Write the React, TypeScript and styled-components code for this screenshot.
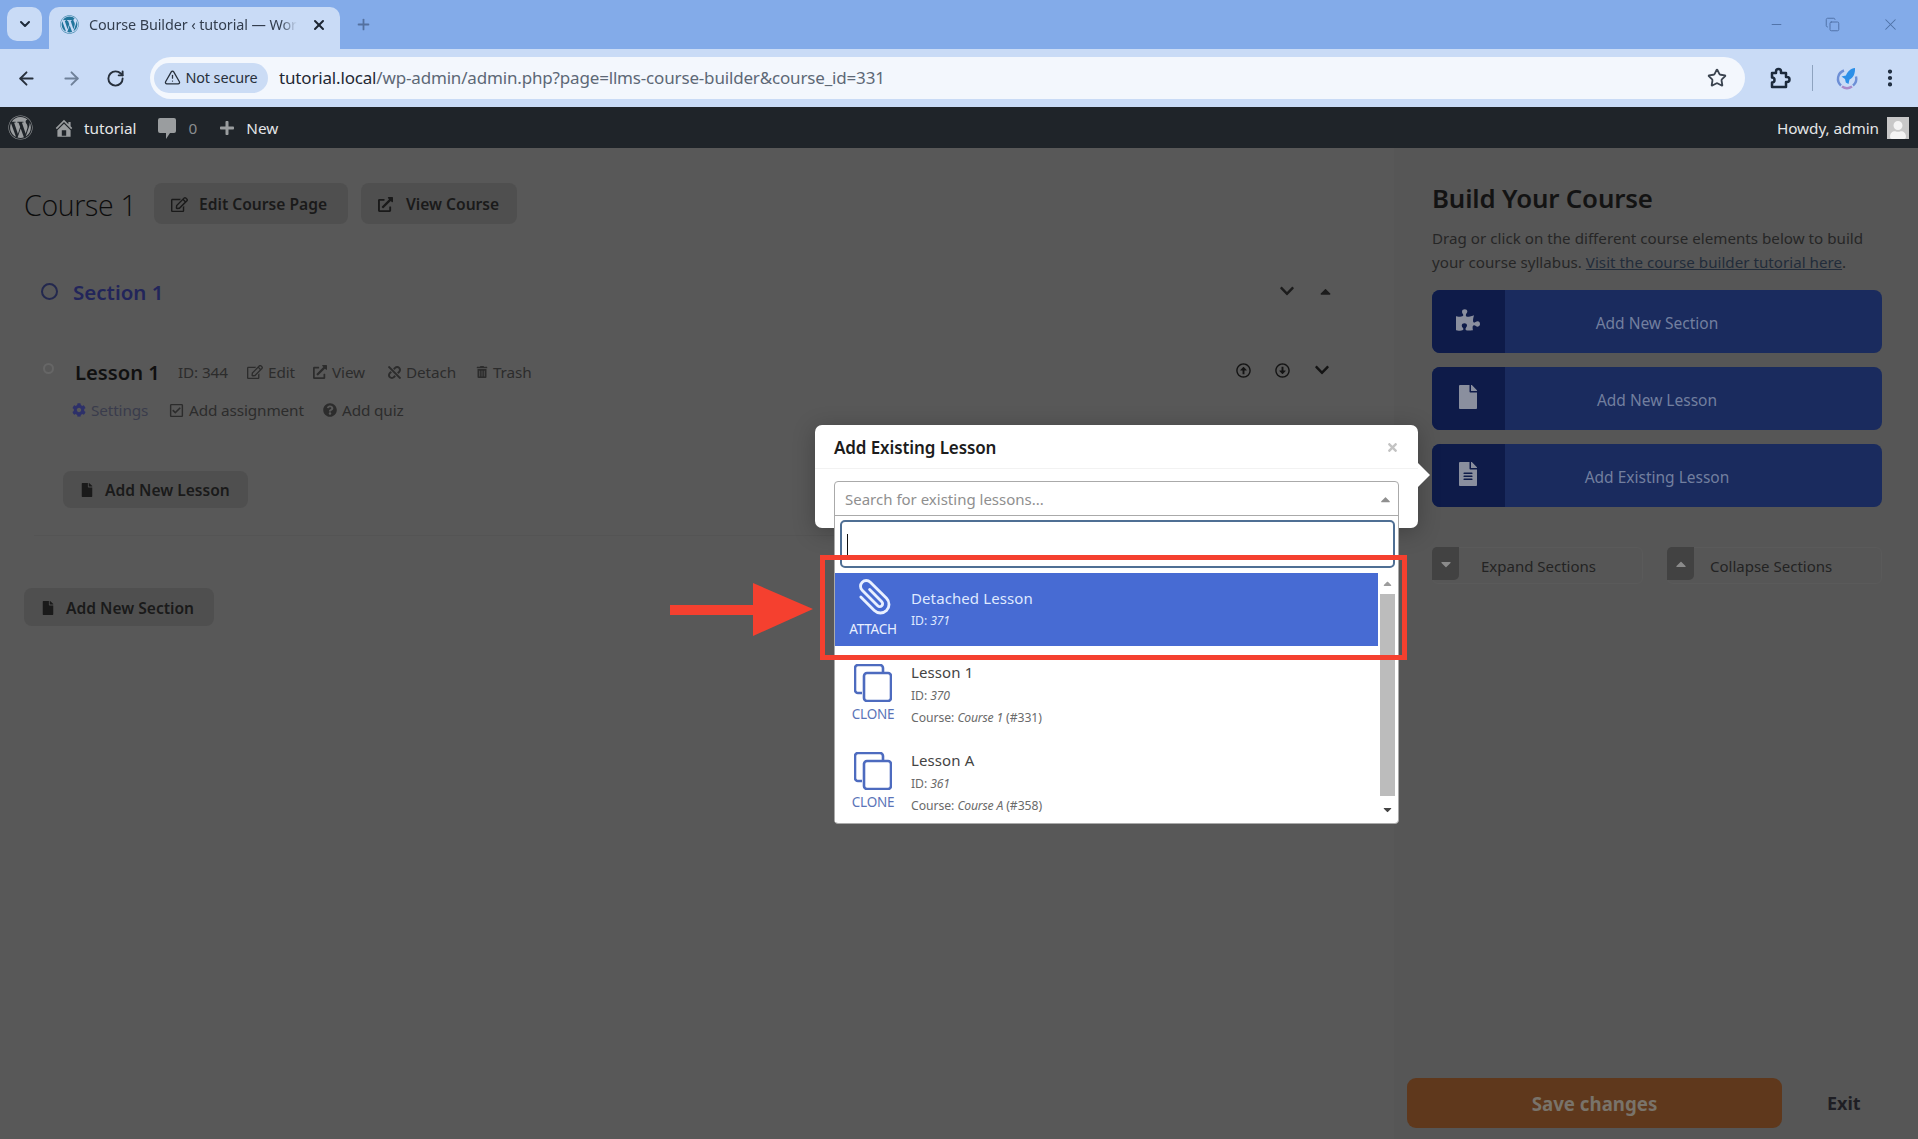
import React from "react";
import styled, { createGlobalStyle } from "styled-components";
import {
  FaCaretDown, FaCaretUp, FaChevronDown, FaCog, FaExternalLinkAlt, FaFile,
  FaFileAlt, FaPlus, FaPuzzlePiece, FaQuestionCircle, FaRegCheckSquare, FaRegEdit,
  FaTimes, FaTrashAlt, FaUnlink, FaUser, FaWordpress, FaRegArrowAltCircleUp, FaRegArrowAltCircleDown,
} from "react-icons/fa";
import { ArrowLeft, ArrowRight, ChevronDown, Copy, Minus, MoreVertical, Plus, RotateCw, Star, TriangleAlert, X } from "lucide-react";

const Global = createGlobalStyle`
  html, body { margin: 0; padding: 0; background: #585858; }
  * { box-sizing: border-box; }
  body { font-family: "Noto Sans", "Open Sans", sans-serif; }
`;

const Page = styled.div`
  width: 1918px; height: 1139px; overflow: hidden; position: relative; display: flex; flex-direction: column;
`;

const TabStrip = styled.div`
  height: 49px; background: #83abe9; display: flex; align-items: flex-start; padding: 7px 0 0 7px; position: relative;
`;
const TabMenu = styled.div`
  width: 35px; height: 34px; border-radius: 10px; background: #c9dbf6; display: flex; align-items: center; justify-content: center; color: #1e2a3a;
`;
const Tab = styled.div`
  width: 291px; height: 42px; margin-left: 7px; background: #c9dbf6; border-radius: 10px 10px 0 0; display: flex; align-items: center;
  padding: 0 12px 7px 11px; font-size: 14.4px; color: #333e4e; letter-spacing: -0.1px;
`;
const TabTitle = styled.span`
  margin-left: 10px; width: 208px; white-space: nowrap; flex: none;
  -webkit-mask-image: linear-gradient(90deg, #000 92%, transparent);
`;
const TabClose = styled.span`
  margin-left: 14px; display: flex; color: #1d2633;
`;
const NewTab = styled.span`
  margin: 9px 0 0 15px; display: flex; color: #54719f;
`;
const WindowControls = styled.div`
  margin-left: auto; display: flex; align-items: center; gap: 41px; height: 34px; padding-right: 18px; color: #4f70a5;
`;
const Toolbar = styled.div`
  height: 58px; background: #c9dbf6; display: flex; align-items: center; padding: 0 17px 0 16px; color: #29323f;
`;
const NavButtons = styled.div`
  display: flex; align-items: center; gap: 24px; width: 134px; flex: none;
`;
const NavIcon = styled.span<{ $dim?: boolean }>`
  display: flex; color: ${(p) => (p.$dim ? "#6f8199" : "#27303c")};
`;
const Omnibox = styled.div`
  width: 1595px; height: 42px; flex: none; border-radius: 21px; background: #f3f7fd; display: flex; align-items: center; padding: 0 18px 1px 4px; font-size: 17px; letter-spacing: -0.17px;
`;
const SecureChip = styled.div`
  width: 114px; height: 30px; border-radius: 15px; background: #cbdcf5; display: flex; align-items: center; justify-content: center; gap: 4px; font-size: 14.4px; color: #27303c; letter-spacing: -0.1px; flex: none;
`;
const UrlHost = styled.span`
  margin-left: 11px; color: #1f2833;
`;
const UrlRest = styled.span`
  color: #5d6876; flex: 1;
`;
const StarIcon = styled.span`
  display: flex; color: #3b4450;
`;
const ToolbarRight = styled.div`
  display: flex; align-items: center; margin-left: 22px; color: #1c2a3c; flex: none;
`;
const ToolDivider = styled.span`
  width: 1px; height: 26px; background: #8ea3bf; margin: 0 22px 0 21px;
`;
const MenuDots = styled.span`
  display: flex; margin-left: 20px;
`;
const AdminBar = styled.div`
  height: 41px; background: #1f2429; display: flex; align-items: center; color: #e4e6e7; font-size: 15.3px; padding: 0 9px 0 8px;
`;
const AdminItem = styled.span<{ $gap?: number; $left?: number }>`
  display: flex; align-items: center; gap: ${(p) => p.$gap ?? 7}px; margin-left: ${(p) => p.$left ?? 0}px;
`;
const AdminIcon = styled.span`
  display: flex; color: #9a9d9f;
`;
const AdminCount = styled.span`
  color: #8a8d90;
`;
const Howdy = styled.span`
  margin-left: auto; display: flex; align-items: center; gap: 8px; letter-spacing: -0.05px;
`;
const Avatar = styled.span`
  width: 22px; height: 22px; background: #c8c8c8; display: flex; align-items: flex-end; justify-content: center; color: #f4f4f4; overflow: hidden;
`;

const Main = styled.div`
  flex: 1; display: flex; min-height: 0;
`;
const Builder = styled.div`
  width: 1394px; padding: 35px 0 0 24px; background: #585858;
`;
const TitleRow = styled.div`
  display: flex; align-items: center; height: 41px;
`;
const CourseTitle = styled.h1`
  margin: 0 19px 0 0; font-size: 28.5px; font-weight: 300; color: #0c0c0c; width: 111px; white-space: nowrap; font-family: "Open Sans", sans-serif; letter-spacing: -0.3px; position: relative; top: 1px;
`;
const GhostButton = styled.div<{ $w: number; $h?: number; $gap?: number }>`
  width: ${(p) => p.$w}px; height: ${(p) => p.$h ?? 41}px; border-radius: 8px; background: #4f4f4f; display: flex; align-items: center; justify-content: flex-start; gap: ${(p) => p.$gap ?? 11}px; padding: 1px 0 0 17px;
  font-size: 15.6px; font-weight: 600; color: #1a1a1a; flex: none; white-space: nowrap;
`;
const TitleButtonGap = styled.span`
  width: 13px; flex: none;
`;
const SectionRow = styled.div`
  margin: 50px 0 0 17px; height: 36px; display: flex; align-items: center; width: 1298px;
`;
const SectionDot = styled.span`
  width: 17px; height: 17px; border-radius: 50%; border: 2.5px solid #23284e; margin-right: 15px; flex: none; position: relative; top: -1px;
`;
const SectionName = styled.span`
  font-size: 20.5px; font-weight: 600; color: #22255a; flex: 1;
`;
const RowControls = styled.span`
  display: flex; align-items: center; gap: 22px; color: #1c1c1c; padding-right: 5px; position: relative; top: -1px;
`;
const LessonRow = styled.div`
  margin: 45px 0 0 19px; height: 34px; display: flex; align-items: center; width: 1296px;
`;
const LessonDot = styled.span`
  width: 11px; height: 11px; border-radius: 50%; border: 2px solid #666; margin-right: 21px; flex: none; position: relative; top: -4px;
`;
const LessonName = styled.span`
  font-size: 20.2px; font-weight: 600; color: #101010; width: 103px; flex: none; white-space: nowrap;
`;
const LessonMeta = styled.span`
  display: flex; align-items: center; font-size: 15.3px; color: #2c2c2c; flex: 1; letter-spacing: -0.12px;
`;
const MetaItem = styled.span<{ $w: number }>`
  display: flex; align-items: center; gap: 5px; width: ${(p) => p.$w}px; flex: none; white-space: nowrap;
`;
const LessonControls = styled.span`
  display: flex; align-items: center; gap: 24px; color: #141414; padding-right: 9px; position: relative; top: -2px;
`;
const LessonActions = styled.div`
  margin: 5px 0 0 48px; height: 32px; display: flex; align-items: center; font-size: 15.3px; color: #2c2c2c; letter-spacing: -0.12px;
`;
const SettingsIcon = styled.span`
  display: flex; color: #2d3069;
`;
const SettingsLabel = styled.span`
  color: #3a3c4c;
`;
const AddLessonWrap = styled.div`
  margin: 45px 0 0 39px;
`;
const Separator = styled.div`
  margin: 27px 0 0 10px; width: 1310px; height: 1px; background: #545454;
`;
const AddSectionWrap = styled.div`
  margin: 52px 0 0 0;
`;

const Sidebar = styled.div`
  flex: 1; background: #565656; padding: 32px 36px 11px 38px; display: flex; flex-direction: column;
`;
const SideTitle = styled.h2`
  margin: 0; font-size: 25.8px; font-weight: 600; color: #131313; line-height: 36px; white-space: nowrap; letter-spacing: -0.15px;
`;
const SideText = styled.p`
  margin: 10px 0 0; font-size: 15.15px; line-height: 24px; color: #262626; letter-spacing: 0.02px; white-space: nowrap;
`;
const SideLink = styled.span`
  color: #222c3a; text-decoration: underline;
`;
const BigButtons = styled.div`
  display: flex; flex-direction: column; gap: 14px; margin-top: 16px;
`;
const BigButton = styled.div`
  height: 63px; border-radius: 8px; background: #1a2b5e; display: flex; overflow: hidden; font-size: 15.5px; color: #727f9f;
`;
const BigIcon = styled.span`
  width: 73px; flex: none; background: #0e1b49; display: flex; align-items: center; justify-content: center; color: #8a8f9e; padding-bottom: 4px; padding-right: 2px;
`;
const BigLabel = styled.span`
  flex: 1; display: flex; align-items: center; justify-content: center; padding: 2px 73px 0 0;
`;
const ToggleRow = styled.div`
  margin-top: 40px; display: flex; justify-content: space-between;
`;
const Toggle = styled.div<{ $w: number }>`
  width: ${(p) => p.$w}px; height: 37px; display: flex; border: 1px solid #5a5a5a; border-radius: 6px; font-size: 15px; color: #232323;
`;
const ToggleIcon = styled.span`
  width: 27px; height: 33px; margin: -1px 0 0 -1px; background: #424242; border-radius: 5px 0 5px 0; display: flex; align-items: center; justify-content: center; color: #8b8b8b;
`;
const ToggleLabel = styled.span<{ $left: number }>`
  margin-left: ${(p) => p.$left}px; display: flex; align-items: center;
`;
const SaveRow = styled.div`
  margin-top: auto; margin-left: -25px; display: flex; align-items: center;
`;
const SaveButton = styled.div`
  width: 375px; height: 50px; border-radius: 9px; background: #5f381c; color: #79736a; font-weight: 700; font-size: 18.7px; display: flex; align-items: center; justify-content: center;
`;
const ExitLabel = styled.span`
  margin-left: 45px; font-weight: 700; font-size: 18px; color: #1e1e24;
`;

/* Overlays */
const Popup = styled.div`
  position: absolute; left: 815px; top: 425px; width: 603px; height: 103px; border-radius: 7px; background: #fff; box-shadow: 0 4px 22px rgba(0,0,0,.25);
`;
const PopupPointer = styled.span`
  position: absolute; right: -12px; top: 38px; width: 0; height: 0; border-top: 12px solid transparent; border-bottom: 12px solid transparent; border-left: 12px solid #fff;
`;
const PopupHead = styled.div`
  height: 44px; padding: 1px 19px 0 19px; display: flex; align-items: center; justify-content: space-between; border-bottom: 1px solid #f2f2f2;
  font-size: 17px; font-weight: 600; color: #1c1c1c; letter-spacing: -0.1px;
`;
const PopupClose = styled.span`
  display: flex; color: #c3c3c3;
`;
const Dropdown = styled.div`
  position: absolute; left: 834px; top: 481px; width: 565px; height: 343px; background: #fff; border: 1px solid #aaa; border-radius: 4px; display: flex; flex-direction: column;
`;
const SelectHead = styled.div`
  height: 34px; display: flex; align-items: center; justify-content: space-between; padding: 1px 5px 0 10px; border-bottom: 1px solid #aaa; font-size: 15px; color: #8f8f8f; flex: none;
`;
const CaretBox = styled.span`
  display: flex; color: #8f8f8f;
`;
const SearchBox = styled.div`
  margin: 4px 3px 0 5px; height: 48px; border: 2px solid #4f6f94; border-radius: 5px; padding: 12px 0 0 5px; flex: none;
`;
const Cursor = styled.span`
  display: block; width: 1px; height: 22px; background: #111;
`;
const ResultArea = styled.div`
  margin-top: 5px; flex: 1; display: flex; min-height: 0;
`;
const Results = styled.div`
  flex: 1; display: flex; flex-direction: column;
`;
const Result = styled.div<{ $active?: boolean; $h: number }>`
  height: ${(p) => p.$h}px; display: flex; background: ${(p) => (p.$active ? "#476bd3" : "#fff")}; color: ${(p) => (p.$active ? "#dfe9ff" : "#444")}; flex: none;
`;
const ActionCol = styled.div<{ $active?: boolean }>`
  width: 76px; flex: none; display: flex; flex-direction: column; align-items: center; color: ${(p) => (p.$active ? "#e9f0ff" : "#4d6bbf")};
`;
const ActionIcon = styled.span<{ $top: number }>`
  height: 40px; margin-top: ${(p) => p.$top}px; display: flex; align-items: center; justify-content: center;
`;
const ActionText = styled.span<{ $top: number; $active?: boolean }>`
  font-size: 13.5px; margin-top: ${(p) => p.$top}px; line-height: 16px; letter-spacing: -0.25px; color: ${(p) => (p.$active ? "#e9f0ff" : "#5a74b8")};
`;
const ResultBody = styled.div<{ $top: number }>`
  padding-top: ${(p) => p.$top}px; display: flex; flex-direction: column;
`;
const ResultName = styled.span`
  font-size: 15px; line-height: 20px; letter-spacing: 0.1px;
`;
const ResultMeta = styled.span<{ $active?: boolean }>`
  font-size: 12.2px; line-height: 16px; margin-top: ${(p) => (p.$active ? 5 : 6)}px; letter-spacing: -0.05px; color: ${(p) => (p.$active ? "#dfe9ff" : "#6a6a6a")};
  i { letter-spacing: -0.2px; }
`;
const Scrollbar = styled.div`
  width: 20px; padding: 0 3px 0 2px; display: flex; flex-direction: column; align-items: center; flex: none; color: #555;
`;
const ScrollEnd = styled.span<{ $dim?: boolean; $h: number }>`
  height: ${(p) => p.$h}px; flex: none; display: flex; align-items: center; justify-content: center; color: ${(p) => (p.$dim ? "#9c9c9c" : "#444")};
`;
const ScrollThumb = styled.span`
  width: 100%; flex: 1; background: #bcbcbc;
`;
const RedBox = styled.div`
  position: absolute; left: 820px; top: 555px; width: 587px; height: 105px; border: 5px solid #f5402f;
`;
const RedArrow = styled.svg`
  position: absolute; left: 670px; top: 583px;
`;

const CloneIcon = () => (
  <svg width="38" height="38" viewBox="0 0 38 38" fill="none" stroke="currentColor" strokeWidth="2.6" strokeLinejoin="round">
    <path d="M8 29H4a3 3 0 0 1-3-3V4a3 3 0 0 1 3-3H26a3 3 0 0 1 3 3v4" />
    <rect x="10" y="9" width="27" height="28" rx="3" />
  </svg>
);
const ClipIcon = () => (
  <svg width="42" height="42" viewBox="-10 0 44 44" fill="none" stroke="currentColor" strokeWidth="3" strokeLinecap="round">
    <path transform="rotate(-45 12 22)" d="M15 14V32a3 3 0 0 1-6 0V9a6 6 0 0 1 12 0V33a9 9 0 0 1-18 0V13" />
  </svg>
);
const ExtensionIcon = () => (
  <svg width="24" height="24" viewBox="0 0 24 24" fill="none" stroke="currentColor" strokeWidth="2.500" strokeLinejoin="round">
    <path d="M5 7h4V5.500a2.500 2.500 0 0 1 5 0V7h5v4h1a2.500 2.500 0 0 1 0 5h-1v5H5v-4.500a2.500 2.500 0 0 0 0-5z" />
  </svg>
);
const RocketLogo = () => (
  <svg width="24" height="24" viewBox="0 0 24 24" fill="none">
    <path d="M9 4.500A8.800 8.800 0 0 0 6 19.500" stroke="#6d8fd6" strokeWidth="2.400" />
    <path d="M7 20.500a8.800 8.800 0 0 0 10 0" stroke="#a989c9" strokeWidth="2.400" />
    <path d="M18 19.500a8.800 8.800 0 0 0 3-9" stroke="#6d8fd6" strokeWidth="2.400" />
    <path d="M20 2c-4.500.6-7.500 3.500-9 7.500l-4.500 1 3.500 2.500.8 3.500 2.700 1.500 1-4.500c4-1.800 5.800-6 5.500-11.500z" fill="#2b8fe8" />
  </svg>
);
const HomeGlyph = () => (
  <svg width="22" height="22" viewBox="0 0 20 20" fill="currentColor">
    <path d="M16 8.500l1.530 1.530-1.060 1.060L10 4.620l-6.470 6.470-1.060-1.060L10 2.500l4 4v-2h2v4zm-6-2.460l6 5.990V18H4v-5.970zM12 17v-5H8v5h4z" />
  </svg>
);
const CommentGlyph = () => (
  <svg width="20" height="22" viewBox="0 0 20 22" fill="currentColor">
    <path d="M3 1h14a2 2 0 0 1 2 2v11a2 2 0 0 1-2 2h-4l-4 6v-6H3a2 2 0 0 1-2-2V3a2 2 0 0 1 2-2z" />
  </svg>
);
const WpFavicon = () => <FaWordpress size={19} color="#21759b" />;

const App = () => (
  <Page>
    <Global />
    <TabStrip>
      <TabMenu><ChevronDown size={16} strokeWidth={3} /></TabMenu>
      <Tab>
        <WpFavicon />
        <TabTitle>Course Builder ‹ tutorial — Wor</TabTitle>
        <TabClose><X size={16} strokeWidth={3} /></TabClose>
      </Tab>
      <NewTab><Plus size={17} strokeWidth={2.500} /></NewTab>
      <WindowControls>
        <Minus size={15} strokeWidth={1.500} />
        <Copy size={15} strokeWidth={1.500} />
        <X size={19} strokeWidth={1.300} />
      </WindowControls>
    </TabStrip>
    <Toolbar>
      <NavButtons>
        <NavIcon><ArrowLeft size={21} strokeWidth={2.200} /></NavIcon>
        <NavIcon $dim><ArrowRight size={21} strokeWidth={2.200} /></NavIcon>
        <NavIcon><RotateCw size={19} strokeWidth={2.400} /></NavIcon>
      </NavButtons>
      <Omnibox>
        <SecureChip><TriangleAlert size={17} strokeWidth={1.800} />Not secure</SecureChip>
        <UrlHost>tutorial.local</UrlHost>
        <UrlRest>/wp-admin/admin.php?page=llms-course-builder&amp;course_id=331</UrlRest>
        <StarIcon><Star size={20} strokeWidth={2.200} /></StarIcon>
      </Omnibox>
      <ToolbarRight>
        <ExtensionIcon />
        <ToolDivider />
        <RocketLogo />
        <MenuDots><MoreVertical size={22} strokeWidth={2.600} /></MenuDots>
      </ToolbarRight>
    </Toolbar>
    <AdminBar>
      <AdminIcon><FaWordpress size={25} /></AdminIcon>
      <AdminItem $left={20} $gap={9}><AdminIcon><HomeGlyph /></AdminIcon>tutorial</AdminItem>
      <AdminItem $left={20} $gap={12}><AdminIcon><CommentGlyph /></AdminIcon><AdminCount>0</AdminCount></AdminItem>
      <AdminItem $left={22} $gap={11}><AdminIcon><FaPlus size={16} /></AdminIcon>New</AdminItem>
      <Howdy>Howdy, admin<Avatar><FaUser size={18} /></Avatar></Howdy>
    </AdminBar>
    <Main>
      <Builder>
        <TitleRow>
          <CourseTitle>Course 1</CourseTitle>
          <GhostButton $w={194}><FaRegEdit size={17} />Edit Course Page</GhostButton>
          <TitleButtonGap />
          <GhostButton $w={156} $gap={13}><FaExternalLinkAlt size={15} />View Course</GhostButton>
        </TitleRow>
        <SectionRow>
          <SectionDot />
          <SectionName>Section 1</SectionName>
          <RowControls><FaChevronDown size={16} /><FaCaretUp size={17} /></RowControls>
        </SectionRow>
        <LessonRow>
          <LessonDot />
          <LessonName>Lesson 1</LessonName>
          <LessonMeta>
            <MetaItem $w={69}>ID: 344</MetaItem>
            <MetaItem $w={66}><FaRegEdit size={16} />Edit</MetaItem>
            <MetaItem $w={75}><FaExternalLinkAlt size={14} />View</MetaItem>
            <MetaItem $w={88}><FaUnlink size={13} />Detach</MetaItem>
            <MetaItem $w={60}><FaTrashAlt size={12} />Trash</MetaItem>
          </LessonMeta>
          <LessonControls>
            <FaRegArrowAltCircleUp size={15} />
            <FaRegArrowAltCircleDown size={15} />
            <FaChevronDown size={16} />
          </LessonControls>
        </LessonRow>
        <LessonActions>
          <MetaItem $w={97}><SettingsIcon><FaCog size={14} /></SettingsIcon><SettingsLabel>Settings</SettingsLabel></MetaItem>
          <MetaItem $w={154}><FaRegCheckSquare size={15} />Add assignment</MetaItem>
          <MetaItem $w={90}><FaQuestionCircle size={14} />Add quiz</MetaItem>
        </LessonActions>
        <AddLessonWrap>
          <GhostButton $w={185} $h={37}><FaFile size={14} />Add New Lesson</GhostButton>
        </AddLessonWrap>
        <Separator />
        <AddSectionWrap>
          <GhostButton $w={190} $h={38}><FaFile size={14} />Add New Section</GhostButton>
        </AddSectionWrap>
      </Builder>
      <Sidebar>
        <SideTitle>Build Your Course</SideTitle>
        <SideText>
          Drag or click on the different course elements below to build<br />
          your course syllabus. <SideLink>Visit the course builder tutorial here</SideLink>.
        </SideText>
        <BigButtons>
          <BigButton><BigIcon><FaPuzzlePiece size={24} /></BigIcon><BigLabel>Add New Section</BigLabel></BigButton>
          <BigButton><BigIcon><FaFile size={24} /></BigIcon><BigLabel>Add New Lesson</BigLabel></BigButton>
          <BigButton><BigIcon><FaFileAlt size={24} /></BigIcon><BigLabel>Add Existing Lesson</BigLabel></BigButton>
        </BigButtons>
        <ToggleRow>
          <Toggle $w={211}><ToggleIcon><FaCaretDown size={16} /></ToggleIcon><ToggleLabel $left={22}>Expand Sections</ToggleLabel></Toggle>
          <Toggle $w={215}><ToggleIcon><FaCaretUp size={16} /></ToggleIcon><ToggleLabel $left={16}>Collapse Sections</ToggleLabel></Toggle>
        </ToggleRow>
        <SaveRow>
          <SaveButton>Save changes</SaveButton>
          <ExitLabel>Exit</ExitLabel>
        </SaveRow>
      </Sidebar>
    </Main>
    <Popup>
      <PopupHead>Add Existing Lesson<PopupClose><FaTimes size={13} /></PopupClose></PopupHead>
      <PopupPointer />
    </Popup>
    <Dropdown>
      <SelectHead>Search for existing lessons...<CaretBox><FaCaretUp size={15} /></CaretBox></SelectHead>
      <SearchBox><Cursor /></SearchBox>
      <ResultArea>
        <Results>
          <Result $active $h={73}>
            <ActionCol $active>
              <ActionIcon $top={4}><ClipIcon /></ActionIcon>
              <ActionText $active $top={4}>ATTACH</ActionText>
            </ActionCol>
            <ResultBody $top={15}>
              <ResultName>Detached Lesson</ResultName>
              <ResultMeta $active>ID: <i>371</i></ResultMeta>
            </ResultBody>
          </Result>
          <Result $h={88}>
            <ActionCol>
              <ActionIcon $top={17}><CloneIcon /></ActionIcon>
              <ActionText $top={3}>CLONE</ActionText>
            </ActionCol>
            <ResultBody $top={16}>
              <ResultName>Lesson 1</ResultName>
              <ResultMeta>ID: <i>370</i></ResultMeta>
              <ResultMeta>Course: <i>Course 1</i> (#331)</ResultMeta>
            </ResultBody>
          </Result>
          <Result $h={88}>
            <ActionCol>
              <ActionIcon $top={17}><CloneIcon /></ActionIcon>
              <ActionText $top={3}>CLONE</ActionText>
            </ActionCol>
            <ResultBody $top={16}>
              <ResultName>Lesson A</ResultName>
              <ResultMeta>ID: <i>361</i></ResultMeta>
              <ResultMeta>Course: <i>Course A</i> (#358)</ResultMeta>
            </ResultBody>
          </Result>
        </Results>
        <Scrollbar>
          <ScrollEnd $dim $h={21}><FaCaretUp size={13} /></ScrollEnd>
          <ScrollThumb />
          <ScrollEnd $h={27}><FaCaretDown size={13} /></ScrollEnd>
        </Scrollbar>
      </ResultArea>
    </Dropdown>
    <RedBox />
    <RedArrow width="143" height="54" viewBox="0 0 143 54"><path d="M0 22H83V0L143 26 83 53V32H0z" fill="#f5402f" /></RedArrow>
  </Page>
);

export default App;
